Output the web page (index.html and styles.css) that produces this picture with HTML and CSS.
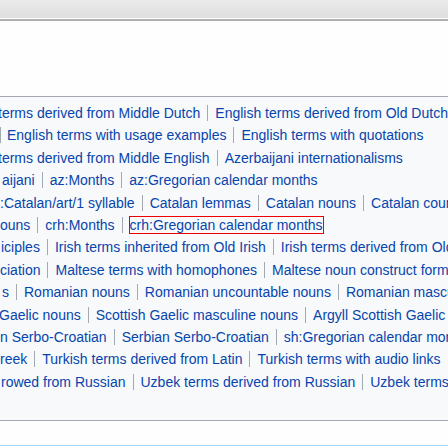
FILE: index.html
```html
<!DOCTYPE html>
<html lang="en">
<head>
<meta charset="utf-8">
<title>Categories</title>
<link rel="stylesheet" href="styles.css">
</head>
<body>
<header class="topbar"></header>
<div class="rule"></div>
<div class="catlinks">
  <ul class="row r1"><li class="first"><a href="#">terms derived from Middle Dutch</a></li><li><a href="#">English terms derived from Old Dutch</a></li></ul>
  <ul class="row r2"><li><a href="#">English terms with usage examples</a></li><li><a href="#">English terms with quotations</a></li></ul>
  <ul class="row r3"><li class="first"><a href="#">terms derived from Middle English</a></li><li><a href="#">Azerbaijani internationalisms</a></li></ul>
  <ul class="row r4"><li class="first"><a href="#">aijani</a></li><li><a href="#">az:Months</a></li><li><a href="#">az:Gregorian calendar months</a></li></ul>
  <ul class="row r5"><li class="first"><a href="#">:Catalan/art/1 syllable</a></li><li><a href="#">Catalan lemmas</a></li><li><a href="#">Catalan nouns</a></li><li><a href="#">Catalan countable nouns</a></li></ul>
  <ul class="row r6"><li class="first"><a href="#">ouns</a></li><li><a href="#">crh:Months</a></li><li><a class="focus" href="#">crh:Gregorian calendar months</a></li></ul>
  <ul class="row r7"><li class="first"><a href="#">iciples</a></li><li><a href="#">Irish terms inherited from Old Irish</a></li><li><a href="#">Irish terms derived from Old Irish</a></li></ul>
  <ul class="row r8"><li class="first"><a href="#">ciation</a></li><li><a href="#">Maltese terms with homophones</a></li><li><a href="#">Maltese noun construct forms</a></li></ul>
  <ul class="row r9"><li class="first"><a href="#">s</a></li><li><a href="#">Romanian nouns</a></li><li><a href="#">Romanian uncountable nouns</a></li><li><a href="#">Romanian masculine nouns</a></li></ul>
  <ul class="row r10"><li class="first"><a href="#">Gaelic nouns</a></li><li><a href="#">Scottish Gaelic masculine nouns</a></li><li><a href="#">Argyll Scottish Gaelic</a></li><li><a href="#">Scottish Gaelic terms</a></li></ul>
  <ul class="row r11"><li class="first"><a href="#">n Serbo-Croatian</a></li><li><a href="#">Serbian Serbo-Croatian</a></li><li><a href="#">sh:Gregorian calendar months</a></li></ul>
  <ul class="row r12"><li class="first"><a href="#">reek</a></li><li><a href="#">Turkish terms derived from Latin</a></li><li><a href="#">Turkish terms with audio links</a></li><li><a href="#">Turkish nouns</a></li></ul>
  <ul class="row r13"><li class="first"><a href="#">rowed from Russian</a></li><li><a href="#">Uzbek terms derived from Russian</a></li><li><a href="#">Uzbek terms with audio links</a></li></ul>
</div>
<footer class="footer"></footer>
</body>
</html>
```
FILE: styles.css
```css
html, body {
  margin: 0;
  padding: 0;
  background: #fefefe;
  overflow: hidden;
  width: 448px;
  height: 448px;
}
body {
  font-family: "Liberation Sans", Arial, sans-serif;
}
.topbar {
  height: 18px;
  background: linear-gradient(to bottom, #ebebeb, #dedede);
}
.rule {
  margin-top: 1px;
  height: 2px;
  background: #b0b0b0;
}
.catlinks {
  margin-top: 75px;
  border-top: 1px solid #a2a9b1;
  border-bottom: 1px solid #a2a9b1;
  background: #f8f9fa;
  padding: 5px 0 27px;
}
.row {
  list-style: none;
  margin: 0;
  padding: 0;
  white-space: nowrap;
  overflow: hidden;
  font-size: 14px;
  line-height: 22.4px;
  height: 22.4px;
}
.row li {
  display: inline;
  padding: 0 7px;
  border-left: 1px solid #a2a9b1;
}
.row li.first {
  border-left: none;
  padding-left: 0;
}
.row a {
  color: #0645ad;
  text-decoration: none;
}
.row a.focus {
  outline: 1px solid #ee0000;
}
.r1 li:first-child, .r3 li:first-child { margin-left: -2px; }
.r10 li:first-child { margin-left: -1px; }
.r2 li:first-child { padding-left: 6px; }
.r4, .r9 { padding-left: 2px; }
.r7, .r13 { padding-left: 1px; }
.footer {
  margin-top: 24px;
  border-top: 1px solid #a7d7f9;
  height: 3px;
}
```
